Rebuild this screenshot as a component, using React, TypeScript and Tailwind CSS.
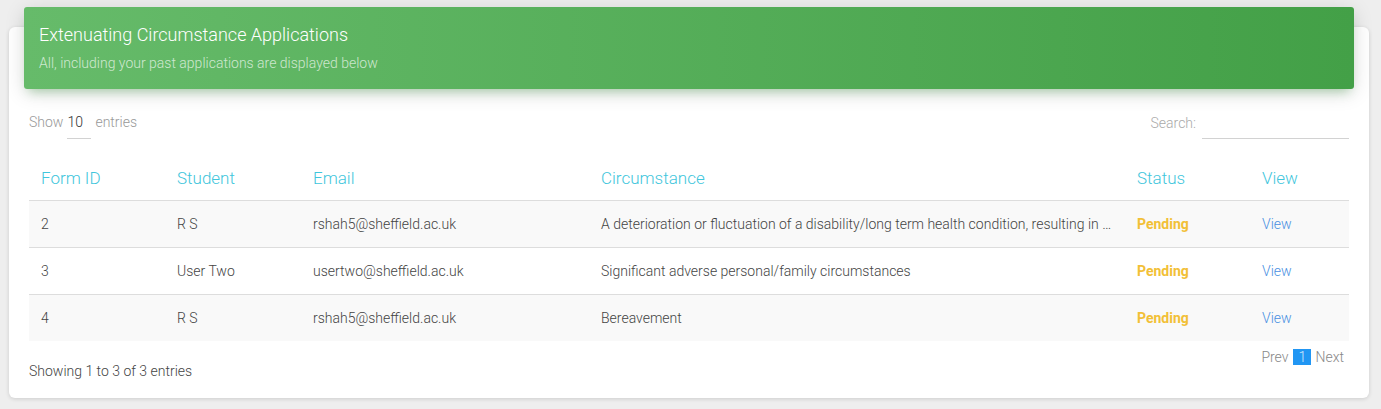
import React from 'react';

interface Application {
    id: number;
    student: string;
    email: string;
    circumstance: string;
    status: string;
}

const applications: Application[] = [
    {
        id: 2,
        student: 'R S',
        email: 'rshah5@sheffield.ac.uk',
        circumstance:
            'A deterioration or fluctuation of a disability/long term health condition, resulting in a significant impact on study',
        status: 'Pending',
    },
    {
        id: 3,
        student: 'User Two',
        email: 'usertwo@sheffield.ac.uk',
        circumstance: 'Significant adverse personal/family circumstances',
        status: 'Pending',
    },
    {
        id: 4,
        student: 'R S',
        email: 'rshah5@sheffield.ac.uk',
        circumstance: 'Bereavement',
        status: 'Pending',
    },
];

export default function App() {
    return (
        <div
            className="min-h-[409px] bg-[#eeeeee] pt-[27px] pl-[9px] pr-[12px] pb-[11px]"
            style={{ fontFamily: 'Roboto, "Liberation Sans", sans-serif' }}
        >
            <div className="flex flex-col bg-white rounded-[6px] shadow-[0_1px_4px_rgba(0,0,0,0.14)] h-[371px] px-[20px]">
                {/* Card header */}
                <div className="-mx-[5px] -mt-[20px] h-[82px] shrink-0 rounded-[3px] bg-gradient-to-r from-[#66bb6a] to-[#43a047] shadow-[0_4px_20px_rgba(0,0,0,0.14),0_7px_10px_-5px_rgba(76,175,80,0.4)] px-[15px] pt-[17px]">
                    <h4 className="text-white text-[18px] font-light leading-[22px]">
                        Extenuating Circumstance Applications
                    </h4>
                    <p className="text-white/70 text-[14px] font-light leading-[18px] mt-[8px]">
                        All, including your past applications are displayed below
                    </p>
                </div>

                {/* Controls */}
                <div className="flex justify-between items-start mt-[16px] h-[35px]">
                    <div className="flex items-start text-[14px] font-light text-[#999]">
                        <span className="leading-[34px]">Show</span>
                        <span className="ml-[4px] w-[24px] border-b border-[#d2d2d2] h-[34px] text-[14px] text-[#333] leading-[34px]">
                            10
                        </span>
                        <span className="ml-[4px] leading-[34px]">entries</span>
                    </div>
                    <div className="flex items-start text-[14px] font-light text-[#aaa]">
                        <span className="leading-[36px] mr-[6px]">Search:</span>
                        <span className="w-[147px] h-[34px] border-b border-[#d2d2d2]"></span>
                    </div>
                </div>

                {/* Table */}
                <table className="w-full table-fixed border-collapse mt-[13px]">
                    <colgroup>
                        <col className="w-[136px]" />
                        <col className="w-[136px]" />
                        <col className="w-[288px]" />
                        <col className="w-[536px]" />
                        <col className="w-[125px]" />
                        <col className="w-[99px]" />
                    </colgroup>
                    <thead>
                        <tr className="h-[47px] border-b border-[#dddddd]">
                            {['Form ID', 'Student', 'Email', 'Circumstance', 'Status', 'View'].map((h) => (
                                <th
                                    key={h}
                                    className="px-[12px] pt-[4px] text-left text-[17px] font-light text-[#3fc6dc]"
                                >
                                    {h}
                                </th>
                            ))}
                        </tr>
                    </thead>
                    <tbody>
                        {applications.map((app, i) => (
                            <tr
                                key={app.id}
                                className={`h-[47px] text-[14px] font-light text-[#444] ${
                                    i % 2 === 0 ? 'bg-[#f9f9f9]' : 'bg-white'
                                } ${i < applications.length - 1 ? 'border-b border-[#dddddd]' : ''}`}
                            >
                                <td className="px-[12px] pt-[2px]">{app.id}</td>
                                <td className="px-[12px] pt-[2px]">{app.student}</td>
                                <td className="px-[12px] pt-[2px]">{app.email}</td>
                                <td className="px-[12px] pt-[2px] truncate">{app.circumstance}</td>
                                <td className="px-[12px] pt-[2px] font-bold text-[#f2c037]">{app.status}</td>
                                <td className="px-[12px] pt-[2px]">
                                    <a href="#" className="text-[#4a90e2]">
                                        View
                                    </a>
                                </td>
                            </tr>
                        ))}
                    </tbody>
                </table>

                {/* Footer */}
                <div className="flex justify-between items-start">
                    <div className="pt-[21px] text-[14px] font-light text-[#444] leading-[18px]">
                        Showing 1 to 3 of 3 entries
                    </div>
                    <div className="flex items-center pt-[8px] pr-[5px] text-[14px] font-light text-[#888] leading-[16px]">
                        <span>Prev</span>
                        <span className="ml-[5px] w-[18px] h-[16px] bg-[#2196f3] text-[#cfe6fb] text-center">1</span>
                        <span className="ml-[4px]">Next</span>
                    </div>
                </div>
            </div>
        </div>
    );
}
